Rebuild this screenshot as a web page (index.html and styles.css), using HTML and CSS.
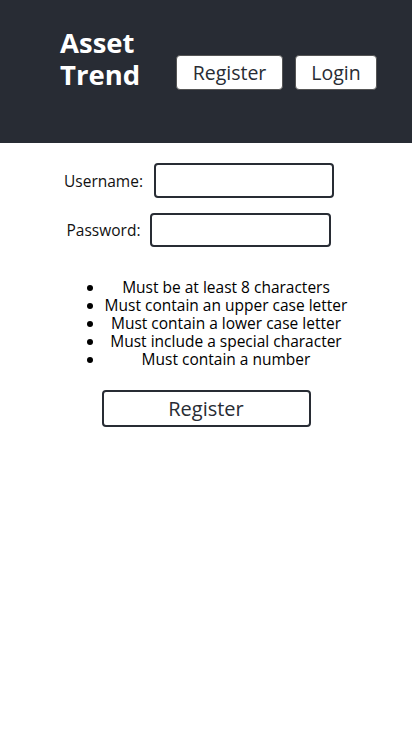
FILE: index.html
```html
<!DOCTYPE html>
<html>
<head>
<meta charset="utf-8">
<link rel="stylesheet" href="styles.css">
</head>
<body>
<header class="header">
  <h1 class="title">Asset<br>Trend</h1>
  <nav class="nav">
    <button class="nav-btn btn-register">Register</button>
    <button class="nav-btn btn-login">Login</button>
  </nav>
</header>
<main class="main">
  <div class="field field-user">
    <label class="label">Username:</label>
    <input class="input" type="text">
  </div>
  <div class="field field-pass">
    <label class="label">Password:</label>
    <input class="input" type="password">
  </div>
  <ul class="rules">
    <li>Must be at least 8 characters</li>
    <li>Must contain an upper case letter</li>
    <li>Must contain a lower case letter</li>
    <li>Must include a special character</li>
    <li>Must contain a number</li>
  </ul>
  <div class="submit-row">
    <button class="submit">Register</button>
  </div>
</main>
</body>
</html>
```
FILE: styles.css
```css
* { box-sizing: border-box; }
body {
  margin: 0;
  font-family: "Open Sans", "Noto Sans", sans-serif;
  color: #000;
  background: #fff;
}
.header {
  background: #282c34;
  height: 143px;
  display: flex;
  align-items: flex-start;
  padding: 27px 0 0 60px;
}
.title {
  margin: 0;
  color: #fff;
  font-size: 27.5px;
  font-weight: 700;
  line-height: 32px;
  width: 116px;
}
.nav {
  display: flex;
  gap: 12px;
  margin-top: 28px;
}
.nav-btn {
  height: 35px;
  background: #fff;
  border: 1px solid #555;
  border-radius: 4px;
  font-family: inherit;
  font-size: 19.5px;
  color: #282c34;
  padding: 0;
}
.btn-register { width: 107px; }
.btn-login { width: 82px; }
.main {
  display: flex;
  flex-direction: column;
  align-items: center;
  padding-top: 20px;
}
.field {
  display: flex;
  align-items: center;
  gap: 11px;
  margin-right: 14px;
}
.field-pass { margin-top: 15px; gap: 10px; }
.label {
  font-size: 15.5px;
  color: #111;
}
.input {
  width: 180px;
  height: 35px;
  border: 2px solid #282c34;
  border-radius: 4px;
}
.field-pass .input { width: 181px; height: 34px; }
.rules {
  margin: 31px 0 0;
  padding: 0 0 0 40px;
  text-align: center;
  font-size: 15.5px;
  line-height: 18px;
  list-style-position: outside;
}
.submit-row { margin-top: 22px; }
.submit {
  width: 209px;
  height: 37px;
  background: #fff;
  border: 2px solid #282c34;
  border-radius: 4px;
  font-family: inherit;
  font-size: 20px;
  color: #282c34;
}
```
